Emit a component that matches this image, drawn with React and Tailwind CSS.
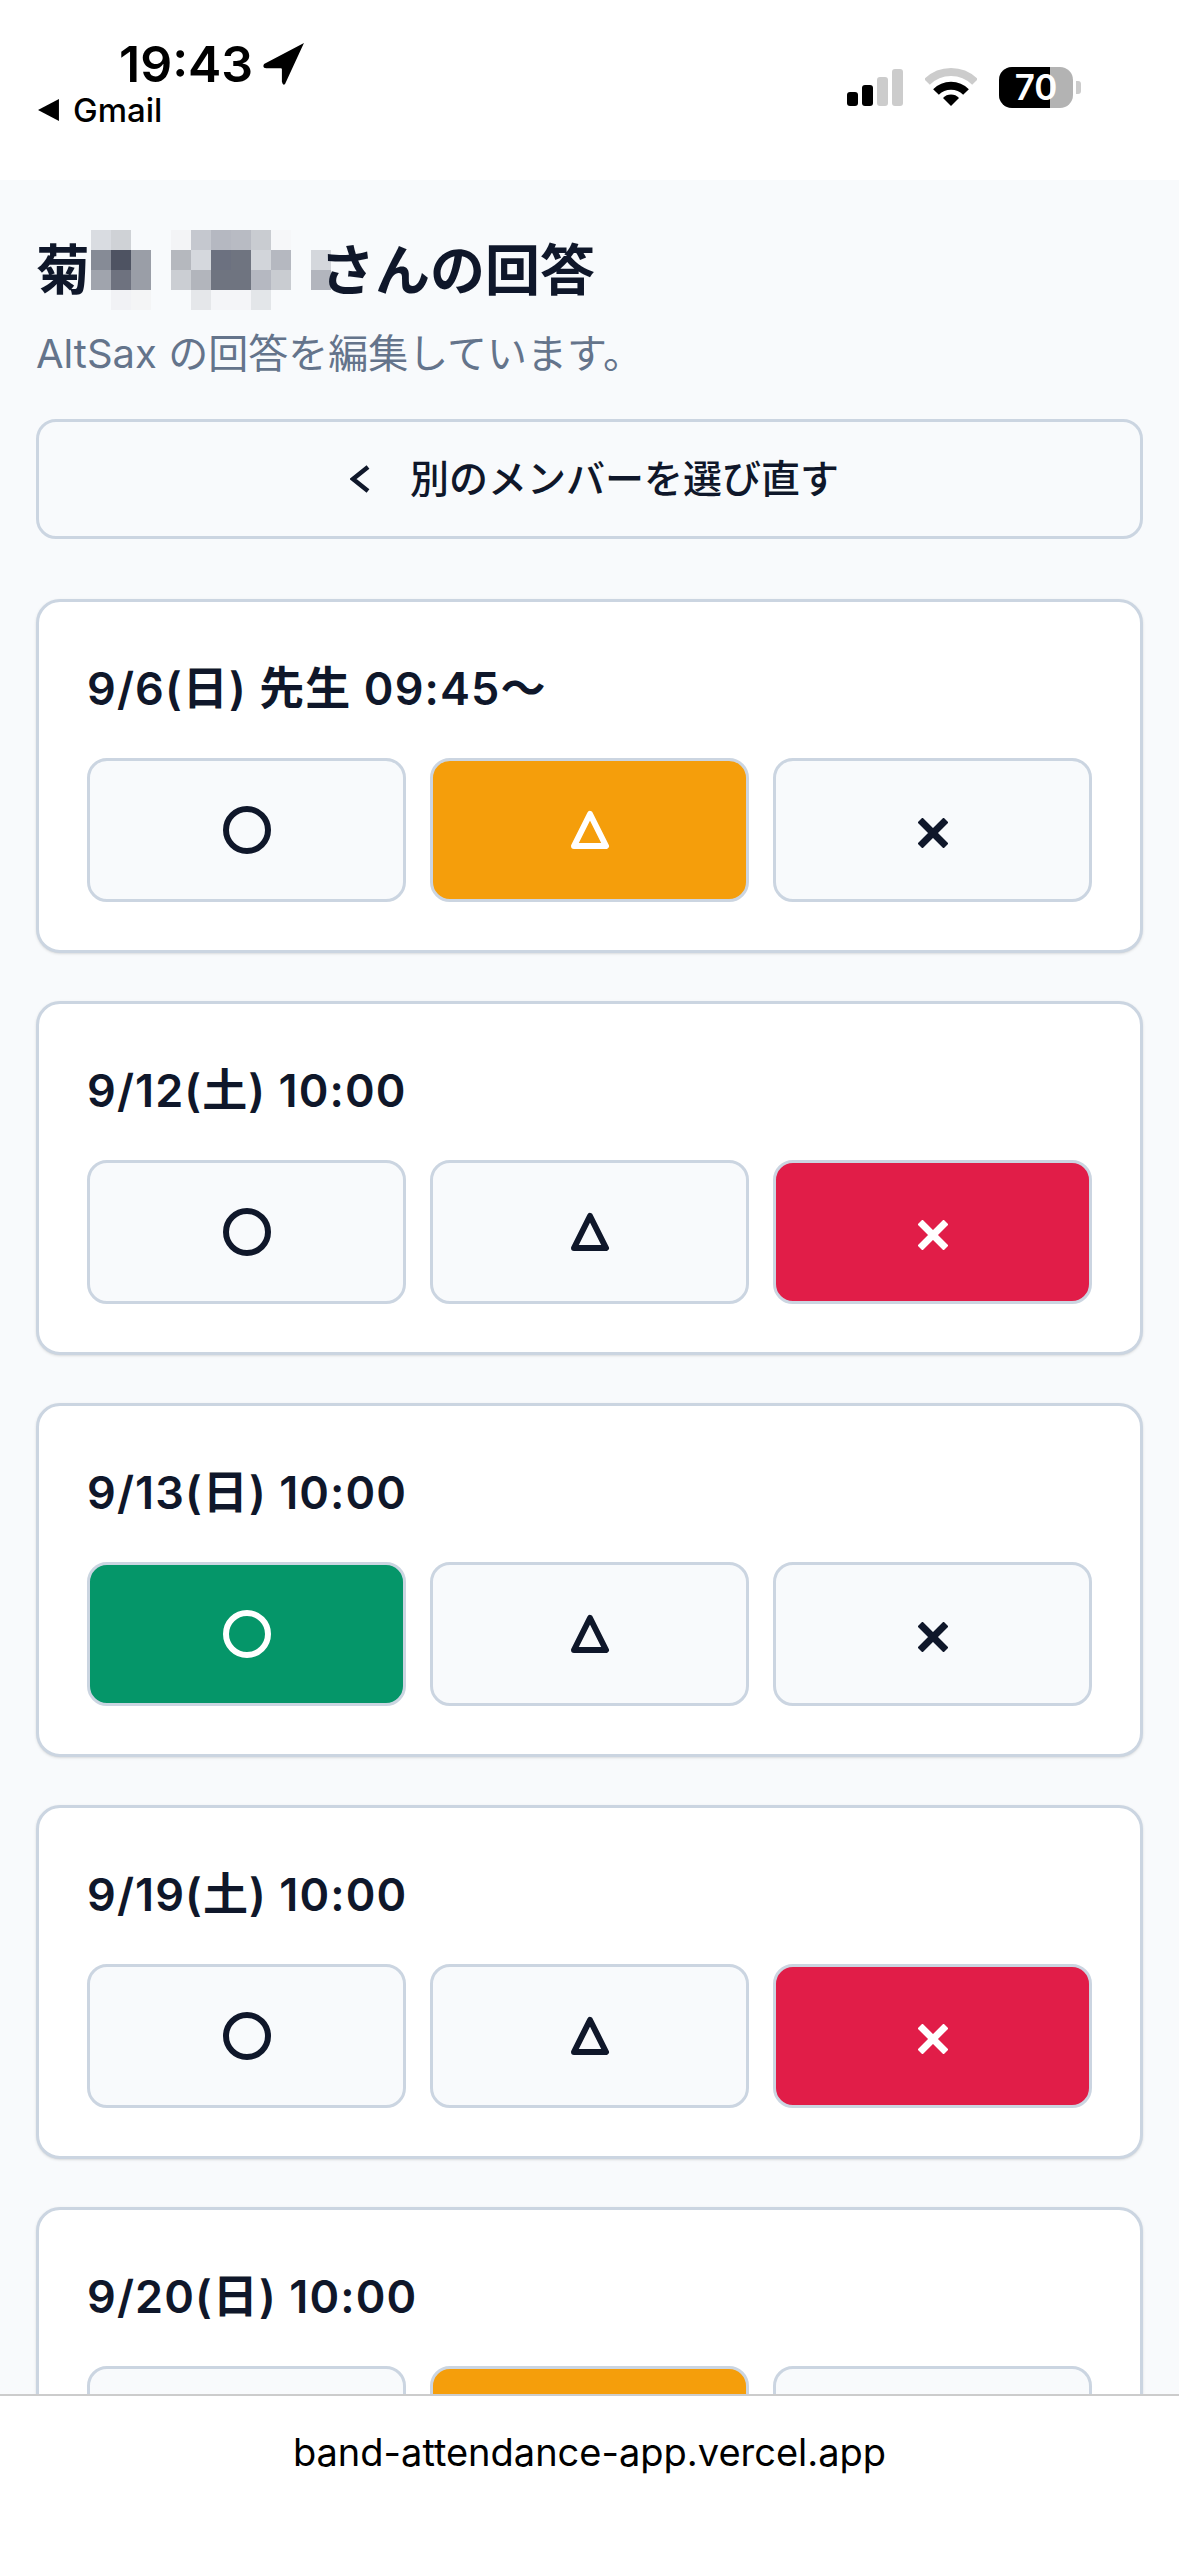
const sans = "font-['Inter','Noto_Sans_CJK_JP',sans-serif]";

const mosaic = [
  'bg-[#d9dce1]', 'bg-[#cfd2d6]', '', '', 'bg-[#f3f4f6]', 'bg-[#c5c8cf]', 'bg-[#b5b8c1]', 'bg-[#b8bbc3]', 'bg-[#c9ccd1]', 'bg-[#f6f7f9]', '', '',
  'bg-[#868b96]', 'bg-[#4e5362]', 'bg-[#9a9ea7]', '', 'bg-[#b5b8be]', 'bg-[#d5d8dd]', 'bg-[#6c7180]', 'bg-[#6f7480]', 'bg-[#d2d5da]', 'bg-[#b5b8c0]', '', 'bg-[#d4d7dc]',
  'bg-[#a0a4ad]', 'bg-[#6e727f]', 'bg-[#9a9ea7]', '', 'bg-[#cbced3]', 'bg-[#b2b5bc]', 'bg-[#6f7480]', 'bg-[#6f7480]', 'bg-[#b5b8c1]', 'bg-[#c9ccd1]', '', 'bg-[#b2b5bd]',
  '', 'bg-[#f1f2f5]', 'bg-[#f4f5f6]', '', '', 'bg-[#e5e7ea]', 'bg-[#f4f5f8]', 'bg-[#f4f5f8]', 'bg-[#e3e6e9]', '', '', '',
];

const dates = [
  { label: '9/6(日) 先生 09:45〜', answer: 'maybe' },
  { label: '9/12(土) 10:00', answer: 'no' },
  { label: '9/13(日) 10:00', answer: 'yes' },
  { label: '9/19(土) 10:00', answer: 'no' },
  { label: '9/20(日) 10:00', answer: 'maybe' },
];

function CircleIcon({ color }) {
  return (
    <svg width="48" height="48" viewBox="0 0 48 48" fill="none" stroke={color} strokeWidth="6">
      <circle cx="24" cy="24" r="21" />
    </svg>
  );
}

function TriangleIcon({ color }) {
  return (
    <svg width="40" height="40" viewBox="0 0 40 40" fill="none" stroke={color} strokeWidth="6" strokeLinejoin="round">
      <path d="M20 4 L36 36 L4 36 Z" />
    </svg>
  );
}

function CrossIcon({ color }) {
  return (
    <svg width="30" height="30" viewBox="0 0 30 30" fill="none" stroke={color} strokeWidth="7" className="mt-[6px]">
      <path d="M2 2 L28 28 M28 2 L2 28" />
    </svg>
  );
}

function ChoiceButton({ type, selected }) {
  const color = selected ? '#ffffff' : '#0f172a';
  const bg = !selected
    ? 'bg-[#f8fafc]'
    : type === 'yes'
      ? 'bg-[#059669]'
      : type === 'maybe'
        ? 'bg-[#f59e0b]'
        : 'bg-[#e11d48]';
  return (
    <button className={`flex h-[144px] items-center justify-center rounded-[20px] border-[3px] border-[#cbd5e1] ${bg}`}>
      {type === 'yes' && <CircleIcon color={color} />}
      {type === 'maybe' && <TriangleIcon color={color} />}
      {type === 'no' && <CrossIcon color={color} />}
    </button>
  );
}

function StatusBar() {
  return (
    <div className="relative flex h-[180px] shrink-0 justify-between bg-white pl-[38px] pr-[98px]">
      <div>
        <div className="ml-[81px] mt-[36px] flex items-center gap-[10px]">
          <span className="text-[50px] font-semibold leading-[56px] text-black">19:43</span>
          <svg width="42" height="42" viewBox="0 0 40 40" fill="black">
            <path d="M39 0 L1 20 Q-1 24 3 24 L17 24 Q18 24 18 25 L18 37 Q19 41 21 39 Z" />
          </svg>
        </div>
        <div className="mt-[1px] flex items-center gap-[13px]">
          <svg width="22" height="22" viewBox="0 0 21 21" fill="black">
            <path d="M20 0 L20 21 L0 10.5 Z" />
          </svg>
          <span className="text-[33px] font-medium leading-[34px] text-black">Gmail</span>
        </div>
      </div>
      <div className="mt-[67px] flex h-[41px] items-end gap-[22px]">
        <div className="mb-[2px] flex items-end gap-[4px]">
          <div className="h-[14px] w-[11px] rounded-[3px] bg-black" />
          <div className="h-[21px] w-[11px] rounded-[3px] bg-black" />
          <div className="h-[29px] w-[11px] rounded-[3px] bg-[#cccccc]" />
          <div className="h-[37px] w-[11px] rounded-[3px] bg-[#cccccc]" />
        </div>
        <svg width="52" height="38" viewBox="0 0 52 38" fill="none" className="mb-[2px]">
          <path d="M2 14 A34 34 0 0 1 50 14" stroke="#cccccc" strokeWidth="8" />
          <path d="M11 24 A21 21 0 0 1 41 24" stroke="black" strokeWidth="8" />
          <path d="M18 30 A11 11 0 0 1 34 30 L26 38 Z" fill="black" />
        </svg>
        <div className="flex items-center gap-[3px]">
          <div className="relative flex h-[41px] w-[74px] overflow-hidden rounded-[13px] bg-[#b3b3b3]">
            <div className="h-full w-[51px] bg-black" />
            <span className="absolute inset-0 flex items-center justify-center text-[35px] font-semibold leading-none text-white">70</span>
          </div>
          <div className="h-[13px] w-[5px] rounded-r-[3px] bg-[#cccccc]" />
        </div>
      </div>
    </div>
  );
}

export default function App() {
  return (
    <div className={`flex h-[2556px] flex-col overflow-hidden bg-white ${sans}`}>
      <StatusBar />

      <main className="min-h-0 flex-1 overflow-hidden bg-[#f8fafc] px-[36px] pt-[52px]">
        <h1 className="flex h-[76px] items-center text-[54px] font-bold text-[#0f172a]">
          <span>菊</span>
          <div className="-my-[2px] ml-[1px] grid h-[80px] w-[240px] shrink-0 grid-cols-[repeat(12,20px)] grid-rows-[repeat(4,20px)]">
            {mosaic.map((cell, i) => (
              <div key={i} className={cell} />
            ))}
          </div>
          <span className="-ml-[11px] text-[55px]">さんの回答</span>
        </h1>
        <p className="mt-[22px] text-[40px] leading-[48px] text-[#64748b]">AltSax の回答を編集しています。</p>

        <button className="mt-[41px] flex h-[120px] w-full items-center justify-center gap-[40px] rounded-[20px] border-[3px] border-[#cbd5e1] pl-[10px] text-[39px] font-medium text-[#0f172a]">
          <svg width="20" height="28" viewBox="0 0 20 28" fill="none" stroke="#0f172a" strokeWidth="4.5">
            <path d="M18 2 L3 14 L18 26" />
          </svg>
          <span>別のメンバーを選び直す</span>
        </button>

        <div className="mt-[60px] flex flex-col gap-[48px]">
          {dates.map((d) => (
            <section key={d.label} className="rounded-[24px] border-[3px] border-[#cbd5e1] bg-white p-[48px] shadow-sm">
              <h2 className="mb-[30px] text-[45px] font-semibold leading-[78px] tracking-[1.1px] text-[#0f172a]">{d.label}</h2>
              <div className="grid grid-cols-3 gap-[24px]">
                <ChoiceButton type="yes" selected={d.answer === 'yes'} />
                <ChoiceButton type="maybe" selected={d.answer === 'maybe'} />
                <ChoiceButton type="no" selected={d.answer === 'no'} />
              </div>
            </section>
          ))}
        </div>
      </main>

      <footer className="flex h-[162px] shrink-0 justify-center border-t-2 border-[#cccccc] bg-white pt-[31px]">
        <span className="text-[38px] leading-[50px] text-black">band-attendance-app.vercel.app</span>
      </footer>
    </div>
  );
}
